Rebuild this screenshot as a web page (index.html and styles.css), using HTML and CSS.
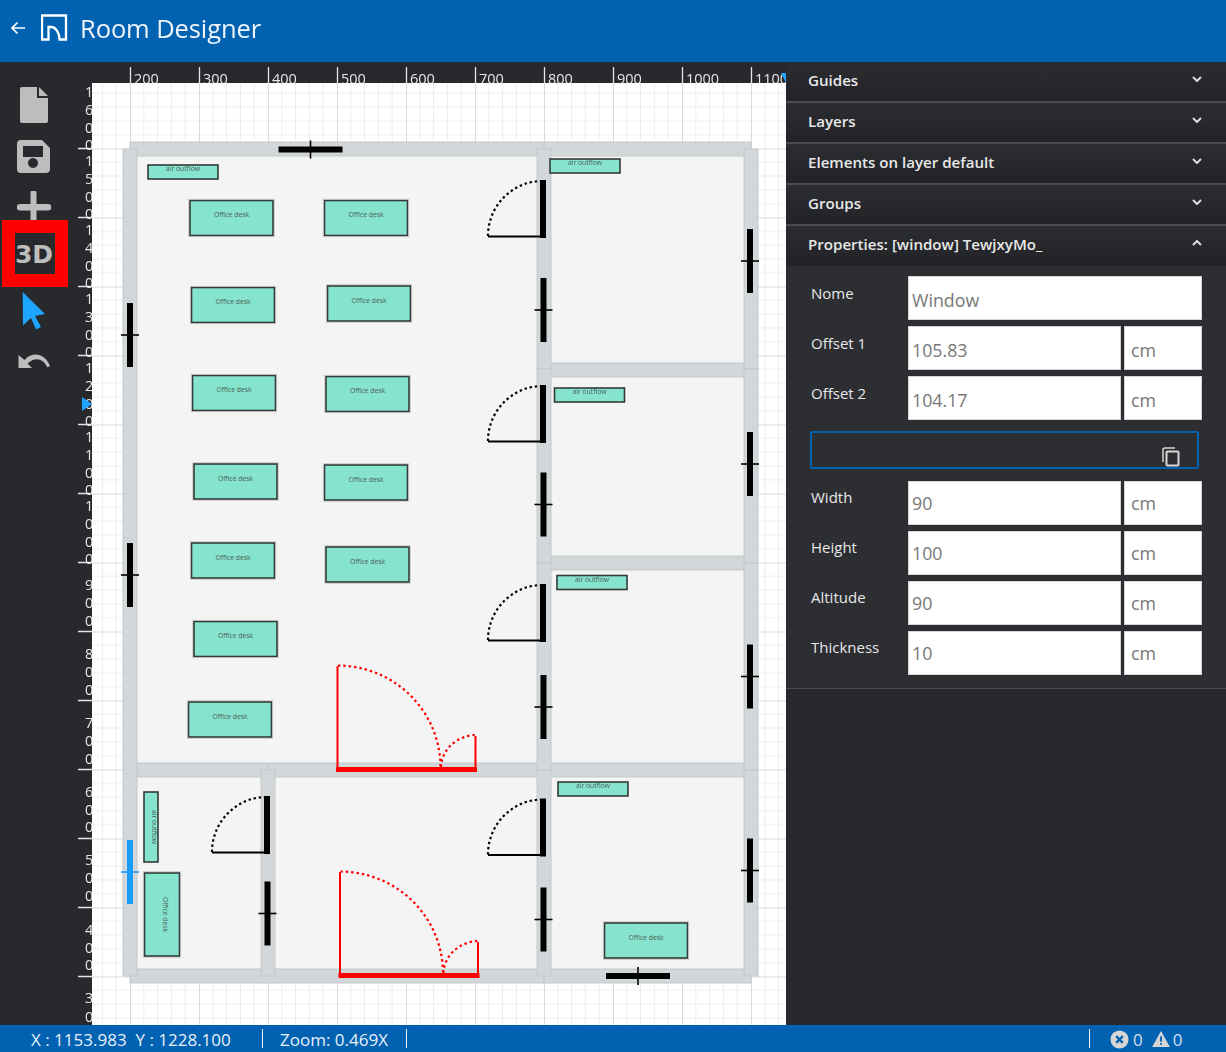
FILE: index.html
```html
<!DOCTYPE html>
<html lang="en">
<head>
<meta charset="utf-8">
<title>Room Designer</title>
<link rel="stylesheet" href="styles.css">
</head>
<body>
<div class="app">
  <header class="topbar">
    <svg class="back" viewBox="0 0 18 16" width="18" height="16"><path d="M16 8H3M8.5 2.5 3 8l5.500 5.500" fill="none" stroke="#fff" stroke-width="1.700"/></svg>
    <svg class="logo" viewBox="42 14 28 28" width="28" height="28"><path d="M43 15.500H67V39.500H60.500C60.500 33 57 27 52 27H49.500V39.500H43Z" fill="none" stroke="#fff" stroke-width="2.300"/></svg>
    <span class="app-title">Room Designer</span>
  </header>

  <main class="workspace">
    <nav class="toolbar">
      <svg class="tool tool-file" viewBox="17 86 36 38" width="36" height="38"><path d="M20 89a2 2 0 0 1 2-2H37V98H48V121a2 2 0 0 1-2 2H22a2 2 0 0 1-2-2Z M39 87 48 96H39Z" fill="#bdbdbd"/></svg>
      <svg class="tool tool-save" viewBox="17 140 36 34" width="36" height="34"><path d="M21 140H42L50 148V169a4 4 0 0 1-4 4H21a4 4 0 0 1-4-4V144a4 4 0 0 1 4-4Z M23 146V157H43V146Z M33 158a5 5 0 1 0 .01 0Z" fill="#bdbdbd" fill-rule="evenodd"/></svg>
      <svg class="tool tool-plus" viewBox="17 191 36 33" width="36" height="33"><path d="M30.500 193a3 3 0 0 1 6 0V204H48a3 3 0 0 1 0 6.500H36.500V224H30.500V210.500H20a3 3 0 0 1 0-6.500H30.500Z" fill="#bdbdbd"/></svg>
      <div class="tool-3d">3D</div>
      <svg class="tool tool-cursor" viewBox="17 292 36 38" width="36" height="38"><path d="M22.700 292 45 314 35 316 41 327 36 329.500 31 318 23 325.500Z" fill="#1ea5ff"/></svg>
      <svg class="tool tool-undo" viewBox="17 352 36 20" width="36" height="20"><path d="M18.500 355V368H32L27.500 363.500C35 356.500 43 358 47.500 367.500L50 366C45 353.500 33 351 24.500 360Z" fill="#bdbdbd"/></svg>
    </nav>

    <svg class="plan" viewBox="78 62 708 963" width="708" height="963">
      <defs>
        <pattern id="grid" x="130" y="148.500" width="69" height="69" patternUnits="userSpaceOnUse">
          <path d="M13.800 0V69M27.600 0V69M41.400 0V69M55.200 0V69M0 13.800H69M0 27.600H69M0 41.400H69M0 55.200H69" stroke="#ececec" stroke-width="1" fill="none"/>
          <path d="M0 0V69M0 0H69" stroke="#cfcfcf" stroke-width="1.500" fill="none"/>
        </pattern>
        <pattern id="hatch" width="2" height="2" patternUnits="userSpaceOnUse">
          <rect width="2" height="2" fill="#d3d8da"/><rect width="1" height="1" fill="#cfd3d5"/>
        </pattern>
        <g id="desk">
          <rect x=".5" y=".5" width="83" height="35" fill="#86e3cd" stroke="#333b39" stroke-width="1.600"/>
          <rect x="-.8" y="-.8" width="85.600" height="37.600" fill="none" stroke="#bbb" stroke-width=".6"/>
          <text class="item-text" x="42" y="17">Office desk</text>
        </g>
        <g id="vent">
          <rect width="70" height="14" fill="#86e3cd" stroke="#333b39" stroke-width="1.600"/>
          <text class="item-text" x="35" y="6">air outflow</text>
        </g>
        <g id="win">
          <rect x="-3" y="-32" width="6" height="64"/>
          <rect x="-9" y="-.8" width="18" height="1.600"/>
        </g>
        <g id="door">
          <rect x="-3" y="-57" width="6" height="58"/>
          <rect x="-55" y="-1.500" width="55" height="2"/>
          <path d="M-55 -1A55 55 0 0 1 -3 -56" fill="none" stroke="#000" stroke-width="2.200" stroke-dasharray="2.400 2.800"/>
        </g>
        <g id="reddoor">
          <rect x="336" y="767" width="141" height="5" fill="#ff0000"/>
          <rect x="336.500" y="666" width="2" height="102" fill="#ff0000"/>
          <rect x="474.500" y="736" width="2" height="32" fill="#ff0000"/>
          <path d="M338 665.500A103 102 0 0 1 440.500 767M441 767A36 33 0 0 1 475 735" fill="none" stroke="#ff0000" stroke-width="2.200" stroke-dasharray="2.400 3"/>
        </g>
        <clipPath id="canvas-clip"><rect x="92" y="83" width="694" height="942"/></clipPath>
      </defs>

      <rect x="78" y="62" width="708" height="963" fill="#27292d"/>

      <g class="ruler-text">
        <text x="134" y="84">200</text><text x="203" y="84">300</text><text x="272" y="84">400</text><text x="341" y="84">500</text><text x="410" y="84">600</text><text x="479" y="84">700</text><text x="548" y="84">800</text><text x="617" y="84">900</text><text x="686" y="84">1000</text><text x="755" y="84">1100</text>
        <text x="85 85 85 85" y="97 115 132.500 150">1600</text>
        <text x="85 85 85 85" y="166 184 201.500 219">1500</text>
        <text x="85 85 85 85" y="235 253 270.500 288">1400</text>
        <text x="85 85 85 85" y="304 322 339.500 357">1300</text>
        <text x="85 85 85 85" y="373 391 408.500 426">1200</text>
        <text x="85 85 85 85" y="442 460 477.500 495">1100</text>
        <text x="85 85 85 85" y="511 529 546.500 564">1000</text>
        <text x="85 85 85" y="590 608 626">900</text>
        <text x="85 85 85" y="659 677 695">800</text>
        <text x="85 85 85" y="728 746 764">700</text>
        <text x="85 85 85" y="797 815 832">600</text>
        <text x="85 85 85" y="865 883 901">500</text>
        <text x="85 85 85" y="935 953 970">400</text>
        <text x="85 85 85" y="1003 1022 1040">300</text>
      </g>
      <path class="ticks" d="M130.500 67V83M199.500 67V83M268.500 67V83M337.500 67V83M406.500 67V83M475.500 67V83M544.500 67V83M613.500 67V83M682.500 67V83M751.500 67V83M77 148.500H92M77 217.500H92M77 286.500H92M77 355.500H92M77 424.500H92M77 493.500H92M77 562.500H92M77 631.500H92M77 700.500H92M77 769.500H92M77 838.500H92M77 907.500H92M77 976.500H92"/>
      <path d="M781 73H786V83Z" fill="#1ea5ff"/>

      <g clip-path="url(#canvas-clip)">
        <rect x="92" y="83" width="694" height="942" fill="#fff"/>
        <rect x="61" y="79.500" width="725" height="945.500" fill="url(#grid)"/>
      </g>
      <path d="M82 397 92 404 82 411Z" fill="#1ea5ff"/>

      <rect x="130" y="149" width="621" height="827" fill="#f4f4f4"/>
      <g class="walls">
        <rect x="130" y="142" width="414" height="14"/>
        <rect x="544" y="142" width="207" height="14"/>
        <rect x="130" y="763" width="138" height="14"/>
        <rect x="268" y="763" width="276" height="14"/>
        <rect x="130" y="969" width="414" height="14"/>
        <rect x="544" y="969" width="207" height="14"/>
        <rect x="544" y="363" width="207" height="14"/>
        <rect x="544" y="556" width="207" height="14"/>
        <rect x="544" y="763" width="207" height="14"/>
        <rect x="123" y="149" width="14" height="827"/>
        <rect x="744" y="149" width="14" height="220"/>
        <rect x="744" y="369" width="14" height="194"/>
        <rect x="744" y="563" width="14" height="207"/>
        <rect x="744" y="770" width="14" height="206"/>
        <rect x="537" y="149" width="14" height="220"/>
        <rect x="537" y="369" width="14" height="194"/>
        <rect x="537" y="563" width="14" height="207"/>
        <rect x="537" y="770" width="14" height="206"/>
        <rect x="261" y="770" width="14" height="206"/>
      </g>

      <use href="#vent" x="148" y="165"/><use href="#vent" x="550" y="159"/><use href="#vent" x="554.500" y="388"/><use href="#vent" x="557" y="575.500"/><use href="#vent" x="558" y="782"/>
      <use href="#desk" x="189.500" y="200"/><use href="#desk" x="324" y="200"/><use href="#desk" x="191" y="287"/><use href="#desk" x="327" y="285.500"/><use href="#desk" x="192" y="375"/><use href="#desk" x="325.500" y="376"/><use href="#desk" x="193.500" y="463.500"/><use href="#desk" x="324" y="464.500"/><use href="#desk" x="191" y="542.500"/><use href="#desk" x="325.500" y="546.500"/><use href="#desk" x="193.500" y="621"/><use href="#desk" x="188" y="701.500"/><use href="#desk" x="604" y="922.500"/>
      <g transform="translate(158 792) rotate(90)"><use href="#vent"/></g>
      <g transform="translate(180 872.500) rotate(90)"><use href="#desk"/></g>

      <use href="#win" x="130" y="335"/><use href="#win" x="130" y="575"/><use href="#win" x="750" y="261"/><use href="#win" x="750" y="464"/><use href="#win" x="750" y="676.500"/><use href="#win" x="750" y="870.500"/><use href="#win" x="543.500" y="310"/><use href="#win" x="543.500" y="504.500"/><use href="#win" x="543.500" y="707"/><use href="#win" x="543.500" y="919.500"/><use href="#win" x="267.500" y="913.500"/>
      <g transform="translate(310.500 149.500) rotate(90)"><use href="#win"/></g>
      <g transform="translate(638 976) rotate(90)"><use href="#win"/></g>
      <use href="#win" x="130" y="872" class="selected"/>

      <use href="#door" x="543" y="237"/><use href="#door" x="543" y="442"/><use href="#door" x="543" y="641"/><use href="#door" x="543" y="855.500"/><use href="#door" x="267" y="853"/>
      <use href="#reddoor"/>
      <use href="#reddoor" x="2.500" y="206"/>
    </svg>

    <aside class="panel">
      <div class="section-head"><span>Guides</span><svg class="chev" viewBox="0 0 10 6" width="10" height="6"><path d="M1 1 5 5 9 1" fill="none" stroke="#ddd" stroke-width="2"/></svg></div>
      <div class="section-head"><span>Layers</span><svg class="chev" viewBox="0 0 10 6" width="10" height="6"><path d="M1 1 5 5 9 1" fill="none" stroke="#ddd" stroke-width="2"/></svg></div>
      <div class="section-head"><span>Elements on layer default</span><svg class="chev" viewBox="0 0 10 6" width="10" height="6"><path d="M1 1 5 5 9 1" fill="none" stroke="#ddd" stroke-width="2"/></svg></div>
      <div class="section-head"><span>Groups</span><svg class="chev" viewBox="0 0 10 6" width="10" height="6"><path d="M1 1 5 5 9 1" fill="none" stroke="#ddd" stroke-width="2"/></svg></div>
      <div class="section-head section-open"><span>Properties: [window] TewjxyMo_</span><svg class="chev" viewBox="0 0 10 6" width="10" height="6"><path d="M1 5 5 1 9 5" fill="none" stroke="#ddd" stroke-width="2"/></svg></div>
      <div class="props">
        <div class="row"><div class="label">Nome</div><div class="field field-wide">Window</div></div>
        <div class="row"><div class="label">Offset 1</div><div class="field">105.83</div><div class="unit">cm</div></div>
        <div class="row"><div class="label">Offset 2</div><div class="field">104.17</div><div class="unit">cm</div></div>
        <div class="copybox"><svg viewBox="0 0 20 21" width="20" height="21"><path d="M3 16V4a2 2 0 0 1 2-2H15" fill="none" stroke="#d8d8d8" stroke-width="1.500"/><rect x="6.500" y="5.500" width="12" height="14" rx="1" fill="none" stroke="#d8d8d8" stroke-width="2"/></svg></div>
        <div class="row row-low"><div class="label">Width</div><div class="field">90</div><div class="unit">cm</div></div>
        <div class="row row-low"><div class="label">Height</div><div class="field">100</div><div class="unit">cm</div></div>
        <div class="row row-low"><div class="label">Altitude</div><div class="field">90</div><div class="unit">cm</div></div>
        <div class="row row-low"><div class="label">Thickness</div><div class="field">10</div><div class="unit">cm</div></div>
      </div>
    </aside>
  </main>

  <footer class="statusbar">
    <span class="coords">X : 1153.983&nbsp;&nbsp;Y : 1228.100</span>
    <span class="sep"></span>
    <span class="zoom">Zoom: 0.469X</span>
    <span class="sep"></span>
    <span class="sep sep-c"></span>
    <svg class="status-icon" viewBox="0 0 20 20" width="19" height="19"><circle cx="10" cy="10" r="9.500" fill="#d6d6d6"/><path d="M6.500 6.500 13.500 13.500M13.500 6.500 6.500 13.500" stroke="#0062b1" stroke-width="2.400"/></svg>
    <span class="count">0</span>
    <svg class="status-icon status-warn" viewBox="0 0 20 18" width="18" height="16"><path d="M10 0 20 18H0Z" fill="#d6d6d6"/><path d="M9 6h2v6H9ZM9 13.500h2v2H9Z" fill="#0062b1"/></svg>
    <span class="count count-warn">0</span>
  </footer>
</div>
</body>
</html>
```

FILE: styles.css
```css
* { box-sizing: border-box; }
html, body { margin: 0; padding: 0; }
body { font-family: "Open Sans", "Noto Sans", sans-serif; background: #27292d; color: #eee; }

.app { width: 1226px; height: 1052px; display: flex; flex-direction: column; overflow: hidden; filter: blur(.35px); }

.topbar { height: 62px; background: #0062b1; display: flex; align-items: center; color: #fff; padding-left: 9px; flex: none; }
.back { margin-top: -6px; }
.logo { margin-left: 14px; margin-top: -6px; }
.app-title { margin-left: 11px; font-size: 25.500px; margin-top: -7px; color: #eef4fa; letter-spacing: -.1px; }

.workspace { flex: 1; display: flex; min-height: 0; }

.toolbar { width: 78px; flex: none; padding: 24px 10px 0 2px; display: flex; flex-direction: column; align-items: center; background: #27292d; }
.tool { display: block; flex: none; }
.tool-save { margin-top: 16px; }
.tool-plus { margin-top: 17px; }
.tool-3d { width: 66px; height: 67px; margin-top: -4px; flex: none; border: 13px solid #ff0000; padding: 1px 2px 0 0; background: #27292d; display: flex; align-items: center; justify-content: center; font-family: "DejaVu Sans", sans-serif; font-weight: 700; font-size: 25px; color: #bdbdbd; position: relative; }
.tool-cursor { margin-top: 5px; }
.tool-undo { margin-top: 22px; }

.plan { display: block; flex: none; }
.ruler-text { font-family: "Open Sans", sans-serif; font-size: 14.500px; fill: #e6e6e6; }
.ticks { stroke: #e6e6e6; stroke-width: 1.300; fill: none; }
.walls rect { fill: url(#hatch); stroke: #c3c8ca; stroke-width: 1; }
.item-text { font-family: "Open Sans", sans-serif; font-size: 6.800px; fill: #4d5f5a; text-anchor: middle; }
.selected { fill: #1a9cff; }

.panel { width: 440px; flex: none; background: #27292d; }
.section-head { height: 41px; padding: 0 24px 6px 22px; display: flex; align-items: center; justify-content: space-between; background: linear-gradient(#2b2d31 0, #212327 39px, #4a4c50 39px); font-size: 15.100px; font-weight: 600; color: #e8e8e8; }
.section-open { height: 40px; background: linear-gradient(#2b2d31, #212327); padding-bottom: 5px; }
.chev { margin-top: -2px; }

.props { background: #2c2e32; padding: 10px 24px 13px 25px; border-bottom: 1px solid #4a4c50; display: flex; flex-direction: column; gap: 6px; }
.row { display: flex; height: 44px; }
.label { width: 97px; flex: none; font-size: 15px; line-height: 22px; padding-top: 6px; color: #e8e8e8; }
.field { width: 213px; flex: none; background: #fff; color: #777; font-size: 17.800px; line-height: 47px; padding-left: 3px; height: 44px; overflow: hidden; border: 1px solid #d5d5d5; }
.field-wide { width: 294px; }
.unit { width: 78px; margin-left: 3px; flex: none; background: #fff; color: #777; font-size: 17.800px; line-height: 47px; padding-left: 6px; height: 44px; overflow: hidden; border: 1px solid #d5d5d5; }
.row-low .label { padding-top: 5px; }
.row-low .field, .row-low .unit { line-height: 43px; }
.copybox { width: 389px; margin-left: -1px; height: 38px; margin-top: 5px; margin-bottom: 6px; border: 2.500px solid #0062b1; border-radius: 2px; display: flex; justify-content: flex-end; align-items: flex-end; padding: 0 17px 0 0; }

.statusbar { height: 27px; flex: none; background: #0062b1; display: flex; align-items: center; color: #e8f0f8; font-size: 17px; padding: 1px 0 0 31px; }
.coords { width: 230.500px; flex: none; }
.sep { width: 1.500px; height: 19px; margin-top: -1px; background: #e8f0f8; flex: none; }
.zoom { margin-left: 17px; width: 125.500px; flex: none; }
.sep-c { margin-left: 681.500px; }
.status-icon { margin-left: 20px; flex: none; }
.status-warn { margin-left: 9px; }
.count { margin-left: 4px; color: #cfe0ef; }
.count-warn { margin-left: 3px; }
```
